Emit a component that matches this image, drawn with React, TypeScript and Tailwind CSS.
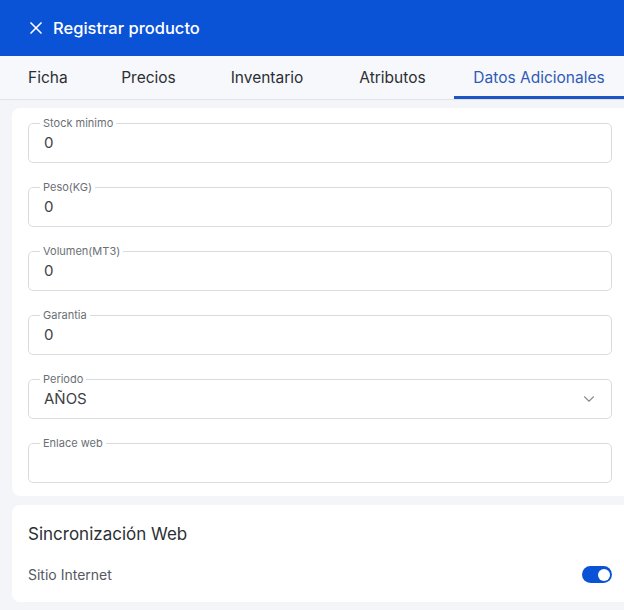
import { X, ChevronDown } from "lucide-react";

const fields = [
  { label: "Stock minimo", value: "0" },
  { label: "Peso(KG)", value: "0" },
  { label: "Volumen(MT3)", value: "0" },
  { label: "Garantia", value: "0" },
  { label: "Periodo", value: "AÑOS", select: true },
  { label: "Enlace web", value: "" },
];

const tabs = ["Ficha", "Precios", "Inventario", "Atributos", "Datos Adicionales"];

function Field({ label, value, select }: { label: string; value: string; select?: boolean }) {
  return (
    <fieldset className="h-[45px] rounded-[5px] border border-[#d9dbe0] pl-[15px] pr-[13px]">
      <legend className="ml-[-4px] px-[3px] text-[11px] leading-[10px] text-[#6b6f76]">{label}</legend>
      <div className="flex h-[30px] items-center justify-between text-[15px] text-[#3d4046]">
        <span>{value}</span>
        {select && <ChevronDown className="h-[18px] w-[18px] text-[#8a8d93]" strokeWidth={1.5} />}
      </div>
    </fieldset>
  );
}

export default function App() {
  return (
    <div className="h-[610px] w-[624px] overflow-hidden bg-[#f4f5f8]" style={{ fontFamily: "Inter, 'Noto Sans', sans-serif" }}>
      <header className="flex h-[56px] items-center gap-[7px] bg-[#0a52d6] px-[26px] text-white">
        <X className="h-[20px] w-[20px]" strokeWidth={2} />
        <h1 className="text-[16.5px] font-medium">Registrar producto</h1>
      </header>

      <nav className="flex h-[44px] border-b border-[#e0e2e7] bg-[#f7f8fb] text-[15.5px] text-[#2c2f33]">
        {tabs.map((t, i) => {
          const active = i === tabs.length - 1;
          const w = ["w-[94px]", "w-[109px]", "w-[128px]", "w-[123px]", "w-[170px]"][i];
          return (
            <div
              key={t}
              className={`flex items-center ${w} ${i === 0 ? "pl-[28px]" : "justify-center"} ${
                active ? "border-b-[3px] border-[#1b55c9] pt-[3px] text-[#2f5bb5]" : ""
              }`}
            >
              {t}
            </div>
          );
        })}
      </nav>

      <main className="pl-[12px] pt-[8px]">
        <section className="flex flex-col gap-[19px] rounded-l-[8px] bg-white pb-[13px] pl-[16px] pr-[12px] pt-[10px]">
          {fields.map((f) => (
            <Field key={f.label} {...f} />
          ))}
        </section>

        <section className="mt-[9px] h-[97px] rounded-l-[8px] bg-white pl-[16px] pr-[12px] pt-[18px]">
          <h2 className="text-[17px] leading-[22px] text-[#2c2f33]">Sincronización Web</h2>
          <div className="mt-[19px] flex items-center justify-between">
            <span className="text-[14px] text-[#55595f]">Sitio Internet</span>
            <span className="flex h-[17px] w-[30px] items-center justify-end rounded-full bg-[#0a52d6] pr-[2px]">
              <span className="h-[12px] w-[12px] rounded-full bg-white" />
            </span>
          </div>
        </section>
      </main>
    </div>
  );
}
